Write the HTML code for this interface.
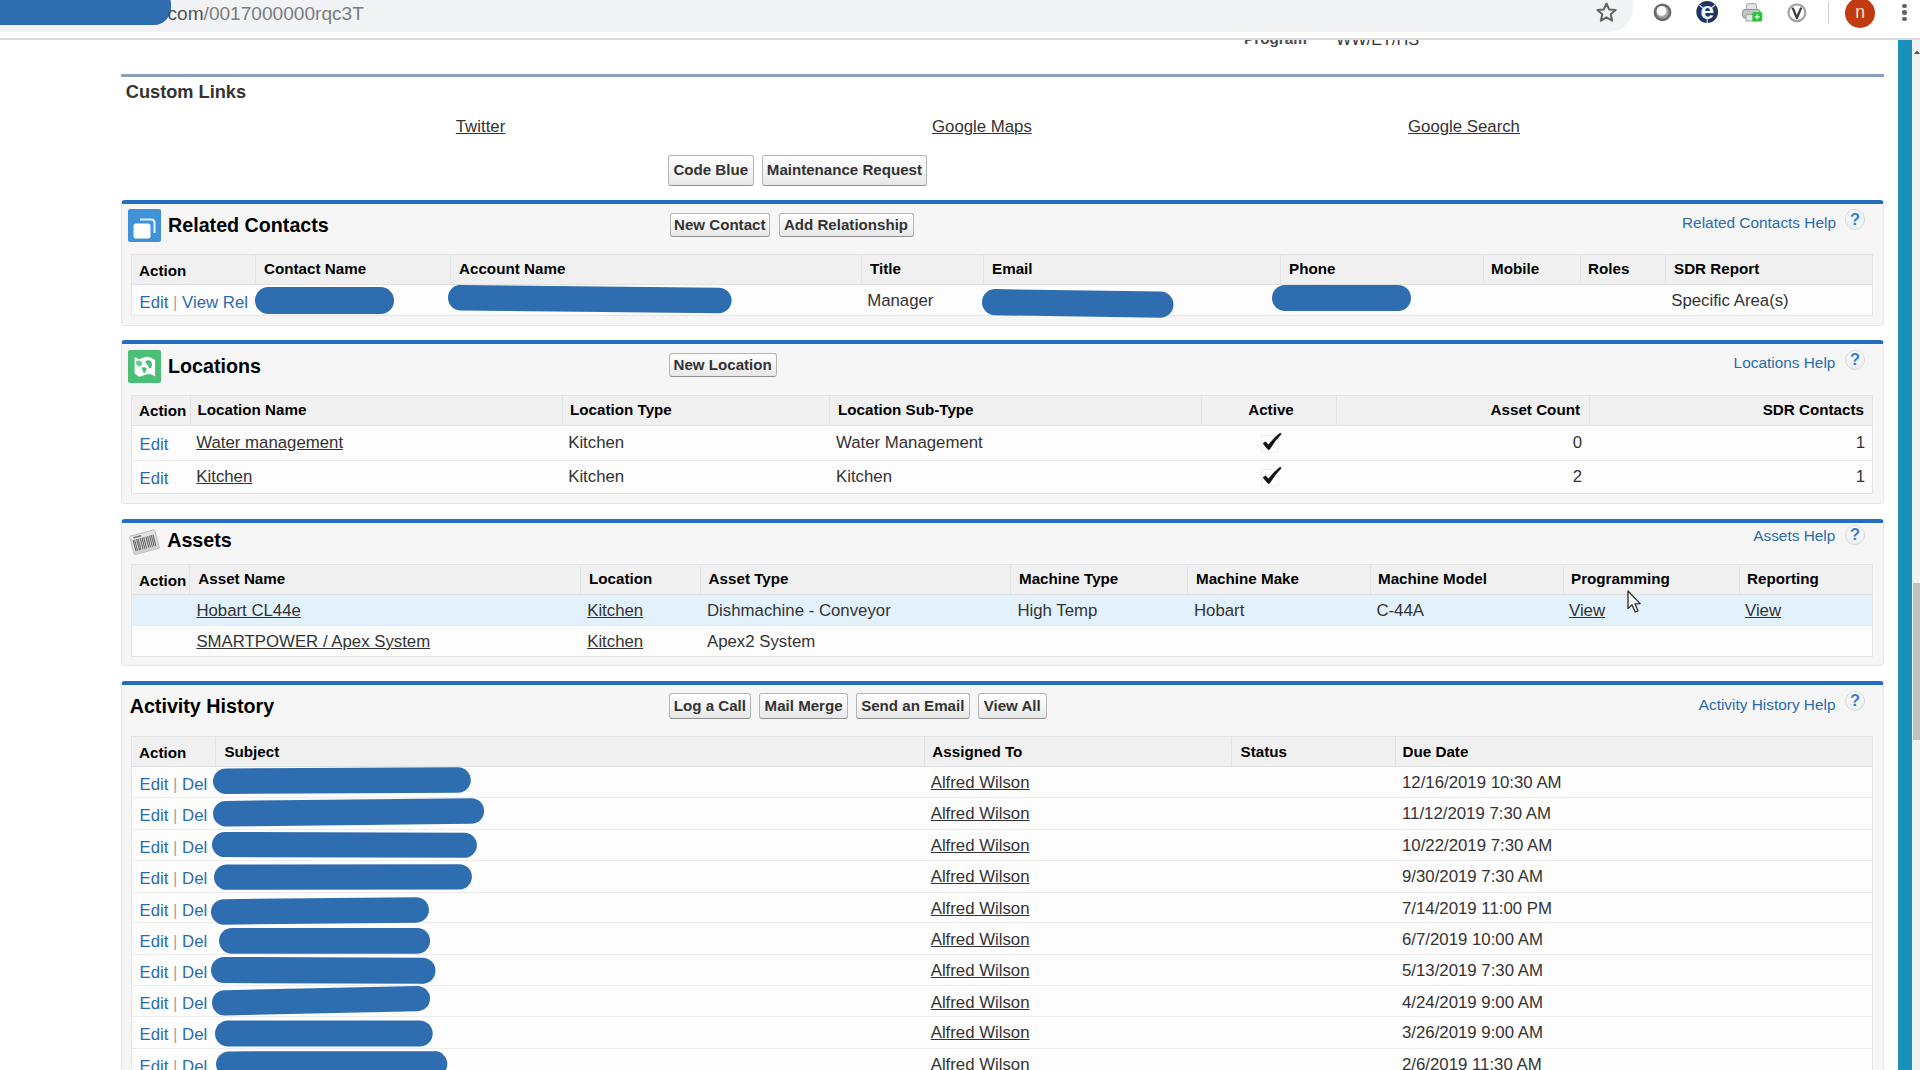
<!DOCTYPE html><html><head><meta charset="utf-8"><style>
html,body{margin:0;padding:0;width:1920px;height:1070px;overflow:hidden;background:#fff;font-family:"Liberation Sans", sans-serif;}
.t{position:absolute;white-space:nowrap;}
.r{position:absolute;}
.btn{position:absolute;box-sizing:content-box;border:1px solid #b5b5b5;border-bottom-color:#8f8f8f;border-radius:3px;
 background:linear-gradient(#fefefe,#f3f3f3 55%,#e7e7e7);color:#333;font-weight:bold;text-align:center;white-space:nowrap;}
.scr{position:absolute;background:#2e6eb0;}
.hq{position:absolute;border:1px solid #d6d9dc;border-radius:50%;background:linear-gradient(#fbfbfb,#eceef0);text-align:center;}
.hq span{position:absolute;left:0;right:0;top:-0.5px;font-size:16.5px;line-height:18px;font-weight:bold;color:#3480cc;}
.pnl{position:absolute;background:#f6f6f6;border:1px solid #e6e6e6;border-top:4px solid #236fbd;border-radius:4px;}
.u{text-decoration:underline;}
</style></head><body>
<div class="r" style="left:0px;top:0px;width:1920.00px;height:38.00px;background:#fff;"></div>
<div class="r" style="left:-40px;top:-24px;width:1672.5px;height:55.5px;background:#f1f3f4;border-radius:0 24px 24px 0;"></div>
<div class="scr" style="left:-40px;top:-12px;width:210.5px;height:37px;border-radius:0 16px 17px 0 / 0 16px 17px 0;"></div>
<div class="t" style="left:167.5px;top:3.83px;font-size:19.1px;line-height:19.1px;color:#7a7c80;"><span style="color:#4f5256">com</span>/0017000000rqc3T</div>
<svg style="position:absolute;left:1594.5px;top:0.5px" width="23" height="23" viewBox="0 0 24 24"><path d="M12 2.6l2.75 6.2 6.75.65-5.1 4.5 1.5 6.6L12 17.1l-5.9 3.45 1.5-6.6-5.1-4.5 6.75-.65z" fill="none" stroke="#5f6368" stroke-width="2.1" stroke-linejoin="round"/></svg>
<svg style="position:absolute;left:1653px;top:3px" width="19" height="19" viewBox="0 0 19 19"><circle cx="9.5" cy="9.3" r="7.6" fill="#a3a3a3" stroke="#6b6b6b" stroke-width="2.6"/><circle cx="8.6" cy="8.0" r="4.9" fill="#fbfbfb"/></svg>
<svg style="position:absolute;left:1696px;top:1.3px" width="22.5" height="22" viewBox="0 0 22.5 22"><circle cx="11.2" cy="11" r="10.9" fill="#1e3560"/><path d="M3.4 4 L7.6 7.6 M19 4 L14.8 7.6 M11.2 16.5 L11.2 22" stroke="#d6e2ee" stroke-width="1.2"/><text x="11.2" y="18.2" text-anchor="middle" font-family="Liberation Sans" font-weight="bold" font-size="24.5" fill="#eef4fa">e</text></svg>
<svg style="position:absolute;left:1742px;top:3px" width="21" height="19" viewBox="0 0 21 19"><rect x="4.5" y="0.6" width="10" height="7" rx="1.8" fill="#e4e4e4" stroke="#a0a0a0"/><rect x="0.6" y="6.5" width="17.5" height="8.5" rx="2.2" fill="#c4c4c4" stroke="#909090"/><rect x="4" y="11.5" width="9" height="6.5" fill="#e6e6e6" stroke="#a0a0a0"/><rect x="10.3" y="9" width="10" height="9.5" rx="1.5" fill="#2cc23e"/><path d="M15.3 11.3v5M12.8 13.8h5" stroke="#e8ffe8" stroke-width="1.3"/></svg>
<svg style="position:absolute;left:1787px;top:2.5px" width="20" height="20" viewBox="0 0 20 20"><circle cx="9.9" cy="9.7" r="8.4" fill="#fff" stroke="#a4a4a4" stroke-width="2.3"/><path d="M5.6 4.6 L9.9 15 L14.2 4.6" fill="none" stroke="#3e3e3e" stroke-width="2.3" stroke-linejoin="round"/></svg>
<div class="r" style="left:1828px;top:2px;width:1.00px;height:22.00px;background:#d2d2d2;"></div>
<div class="r" style="left:1845px;top:-2.5px;width:30.00px;height:30.50px;border-radius:50%;background:#c23b10;"></div>
<div class="t" style="left:1660.2px;width:400px;text-align:center;top:4.10px;font-size:17.6px;line-height:17.6px;color:#f0e4cf;">n</div>
<div class="r" style="left:1902.2px;top:3.5px;width:4.40px;height:4.40px;border-radius:50%;background:#5f6368;"></div>
<div class="r" style="left:1902.2px;top:10.3px;width:4.40px;height:4.40px;border-radius:50%;background:#5f6368;"></div>
<div class="r" style="left:1902.2px;top:17.1px;width:4.40px;height:4.40px;border-radius:50%;background:#5f6368;"></div>
<div style="position:absolute;left:0;top:39px;width:1898px;height:1031px;overflow:hidden;">
<div style="position:absolute;left:0;top:-39px;width:1920px;height:1070px;">
<div class="t" style="left:1244px;top:31.35px;font-size:15.3px;line-height:15.3px;color:#4a4a4a;font-weight:bold;">Program</div>
<div class="t" style="left:1336px;top:30.50px;font-size:16.3px;line-height:16.3px;color:#333;">WW/ET/HS</div>
<div class="r" style="left:121px;top:73.5px;width:1763.00px;height:3.30px;background:#8c9ebe;"></div>
<div class="t" style="left:125.8px;top:82.89px;font-size:18.2px;line-height:18.2px;color:#333;font-weight:bold;">Custom Links</div>
<div class="t" style="left:455.8px;top:119.28px;font-size:16.8px;line-height:16.8px;color:#333;text-decoration:underline;">Twitter</div>
<div class="t" style="left:932px;top:119.28px;font-size:16.8px;line-height:16.8px;color:#333;text-decoration:underline;">Google Maps</div>
<div class="t" style="left:1408px;top:119.28px;font-size:16.8px;line-height:16.8px;color:#333;text-decoration:underline;">Google Search</div>
<div class="btn" style="left:668px;top:155.2px;width:83.50px;height:28.60px;line-height:28.60px;font-size:15.1px;">Code Blue</div>
<div class="btn" style="left:762px;top:155.2px;width:162.80px;height:28.60px;line-height:28.60px;font-size:15.1px;">Maintenance Request</div>
<div class="pnl" style="left:121px;top:200px;width:1761px;height:120.50px;"></div>
<div class="r" style="left:127.5px;top:208.7px;width:33.50px;height:33.50px;background:#3f91d8;border-radius:2px;"></div>
<svg style="position:absolute;left:127.5px;top:208.7px" width="34" height="34" viewBox="0 0 34 34"><path d="M12 10.5 h11.5 a3 3 0 0 1 3 3 v10.5" fill="none" stroke="#fff" stroke-width="2.2" opacity="0.85"/><rect x="5.5" y="14.5" width="17" height="15" rx="2.5" fill="#fff"/></svg>
<div class="t" style="left:168px;top:216.12px;font-size:19.7px;line-height:19.7px;color:#000;font-weight:bold;">Related Contacts</div>
<div class="btn" style="left:669.5px;top:212.8px;width:98.50px;height:22.00px;line-height:22.00px;font-size:15.1px;">New Contact</div>
<div class="btn" style="left:778.5px;top:212.8px;width:133.00px;height:22.00px;line-height:22.00px;font-size:15.1px;">Add Relationship</div>
<div class="t" style="left:1682px;top:215.26px;font-size:15.4px;line-height:15.4px;color:#2a6cab;">Related Contacts Help</div>
<div class="hq" style="left:1844.8px;top:209.3px;width:18.60px;height:18.60px;"><span>?</span></div>
<div class="r" style="left:131px;top:254px;width:1742.00px;height:61.90px;background:#fdfdfd;border:1px solid #e4e5e6;box-sizing:border-box;"></div>
<div class="r" style="left:131px;top:254px;width:1742.00px;height:30.90px;background:#f0f0f0;border:1px solid #e4e5e6;border-bottom-color:#e0e1e2;box-sizing:border-box;"></div>
<div class="r" style="left:255.2px;top:255px;width:1.00px;height:28.90px;background:#e2e3e4;"></div>
<div class="r" style="left:450px;top:255px;width:1.00px;height:28.90px;background:#e2e3e4;"></div>
<div class="r" style="left:860.7px;top:255px;width:1.00px;height:28.90px;background:#e2e3e4;"></div>
<div class="r" style="left:983.2px;top:255px;width:1.00px;height:28.90px;background:#e2e3e4;"></div>
<div class="r" style="left:1280.3px;top:255px;width:1.00px;height:28.90px;background:#e2e3e4;"></div>
<div class="r" style="left:1483px;top:255px;width:1.00px;height:28.90px;background:#e2e3e4;"></div>
<div class="r" style="left:1579.8px;top:255px;width:1.00px;height:28.90px;background:#e2e3e4;"></div>
<div class="r" style="left:1664.6px;top:255px;width:1.00px;height:28.90px;background:#e2e3e4;"></div>
<div class="t" style="left:139px;top:262.63px;font-size:15.2px;line-height:15.2px;color:#000;font-weight:bold;">Action</div>
<div class="t" style="left:264px;top:261.33px;font-size:15.2px;line-height:15.2px;color:#000;font-weight:bold;">Contact Name</div>
<div class="t" style="left:459px;top:261.33px;font-size:15.2px;line-height:15.2px;color:#000;font-weight:bold;">Account Name</div>
<div class="t" style="left:870px;top:261.33px;font-size:15.2px;line-height:15.2px;color:#000;font-weight:bold;">Title</div>
<div class="t" style="left:992px;top:261.33px;font-size:15.2px;line-height:15.2px;color:#000;font-weight:bold;">Email</div>
<div class="t" style="left:1289px;top:261.33px;font-size:15.2px;line-height:15.2px;color:#000;font-weight:bold;">Phone</div>
<div class="t" style="left:1491px;top:261.33px;font-size:15.2px;line-height:15.2px;color:#000;font-weight:bold;">Mobile</div>
<div class="t" style="left:1588px;top:261.33px;font-size:15.2px;line-height:15.2px;color:#000;font-weight:bold;">Roles</div>
<div class="t" style="left:1674px;top:261.33px;font-size:15.2px;line-height:15.2px;color:#000;font-weight:bold;">SDR Report</div>
<div class="t" style="left:139.5px;top:294.58px;font-size:16.8px;line-height:16.8px;color:#2a6cab;">Edit <span style="color:#a8a39a">|</span> View Rel</div>
<div class="scr" style="left:255.2px;top:287.1px;width:138.80px;height:26.50px;border-radius:13.25px;"></div>
<svg style="position:absolute;left:446.00px;top:282.80px" width="287.60" height="32.40"><path d="M14.82 14.70 L272.78 17.45" stroke="#2e6eb0" stroke-width="25.65" stroke-linecap="round" fill="none"/></svg>
<div class="t" style="left:867.2px;top:293.48px;font-size:16.8px;line-height:16.8px;color:#333;">Manager</div>
<svg style="position:absolute;left:980.00px;top:286.60px" width="195.50" height="32.60"><path d="M15.10 15.20 L180.40 17.60" stroke="#2e6eb0" stroke-width="26.20" stroke-linecap="round" fill="none"/></svg>
<div class="scr" style="left:1271.7px;top:284.9px;width:138.90px;height:26.30px;border-radius:13.15px;"></div>
<div class="t" style="left:1671.2px;top:293.48px;font-size:16.8px;line-height:16.8px;color:#333;">Specific Area(s)</div>
<div class="pnl" style="left:121px;top:340px;width:1761px;height:158.50px;"></div>
<div class="r" style="left:127.7px;top:349.5px;width:33.40px;height:33.60px;background:#4bbf78;border-radius:2px;"></div>
<svg style="position:absolute;left:127.7px;top:349.5px" width="33.4" height="33.6" viewBox="0 0 33.4 33.6"><path d="M6.6 7.2 Q9 7.6 11.2 9.6 Q14 7.6 17.2 7.1 Q20 6.6 21.8 7.2 Q24.5 8.3 27.1 10 L27.1 26.4 Q24.5 24.6 21.8 24 Q19 24.3 17.2 24.8 Q14 26.3 11.2 26.8 Q8.5 25.2 6.6 23.3 Z" fill="#fafdfb"/><path d="M7.8 12 Q9.5 9.8 12.5 11 Q14.8 12.6 13.6 15.2 Q12 17.2 9.8 16 Q7.6 14.6 7.8 12 Z" fill="#6ccb8f"/><path d="M13.6 17.6 Q16.8 16.4 18.8 18.4 Q18.2 21.6 16.2 23.4 Q14.4 21.2 13.6 17.6 Z" fill="#4bbf78"/><path d="M17.6 11 Q20.5 9.2 23.2 11.4 Q24.8 14 23.6 17.6 Q22 19 20.6 17.2 Q20.6 15 18.6 14.2 Q17 12.8 17.6 11 Z" fill="#4bbf78"/></svg>
<div class="t" style="left:168px;top:357.12px;font-size:19.7px;line-height:19.7px;color:#000;font-weight:bold;">Locations</div>
<div class="btn" style="left:668.5px;top:352.6px;width:106.30px;height:22.10px;line-height:22.10px;font-size:15.1px;">New Location</div>
<div class="t" style="left:1733.6px;top:355.46px;font-size:15.4px;line-height:15.4px;color:#2a6cab;">Locations Help</div>
<div class="hq" style="left:1844.8px;top:349.5px;width:18.60px;height:18.60px;"><span>?</span></div>
<div class="r" style="left:131px;top:395px;width:1742.00px;height:99.40px;background:#fdfdfd;border:1px solid #e4e5e6;box-sizing:border-box;"></div>
<div class="r" style="left:131px;top:395px;width:1742.00px;height:31.00px;background:#f0f0f0;border:1px solid #e4e5e6;border-bottom-color:#e0e1e2;box-sizing:border-box;"></div>
<div class="r" style="left:190px;top:396px;width:1.00px;height:29.00px;background:#e2e3e4;"></div>
<div class="r" style="left:561.5px;top:396px;width:1.00px;height:29.00px;background:#e2e3e4;"></div>
<div class="r" style="left:829px;top:396px;width:1.00px;height:29.00px;background:#e2e3e4;"></div>
<div class="r" style="left:1201px;top:396px;width:1.00px;height:29.00px;background:#e2e3e4;"></div>
<div class="r" style="left:1336px;top:396px;width:1.00px;height:29.00px;background:#e2e3e4;"></div>
<div class="r" style="left:1589.4px;top:396px;width:1.00px;height:29.00px;background:#e2e3e4;"></div>
<div class="r" style="left:132px;top:459.7px;width:1740.00px;height:1.00px;background:#ececec;"></div>
<div class="t" style="left:139px;top:403.13px;font-size:15.2px;line-height:15.2px;color:#000;font-weight:bold;">Action</div>
<div class="t" style="left:197.5px;top:401.83px;font-size:15.2px;line-height:15.2px;color:#000;font-weight:bold;">Location Name</div>
<div class="t" style="left:570px;top:401.83px;font-size:15.2px;line-height:15.2px;color:#000;font-weight:bold;">Location Type</div>
<div class="t" style="left:838px;top:401.83px;font-size:15.2px;line-height:15.2px;color:#000;font-weight:bold;">Location Sub-Type</div>
<div class="t" style="left:1071px;width:400px;text-align:center;top:401.83px;font-size:15.2px;line-height:15.2px;color:#000;font-weight:bold;">Active</div>
<div class="t" style="right:340px;top:401.83px;font-size:15.2px;line-height:15.2px;color:#000;font-weight:bold;">Asset Count</div>
<div class="t" style="right:56px;top:401.83px;font-size:15.2px;line-height:15.2px;color:#000;font-weight:bold;">SDR Contacts</div>
<div class="t" style="left:139.5px;top:437.08px;font-size:16.8px;line-height:16.8px;color:#2a6cab;">Edit</div>
<div class="t" style="left:196.3px;top:434.88px;font-size:16.8px;line-height:16.8px;color:#333;text-decoration:underline;">Water management</div>
<div class="t" style="left:568.2px;top:434.88px;font-size:16.8px;line-height:16.8px;color:#333;">Kitchen</div>
<div class="t" style="left:836px;top:434.88px;font-size:16.8px;line-height:16.8px;color:#333;">Water Management</div>
<svg style="position:absolute;left:1258px;top:430.00px" width="26" height="26" viewBox="0 0 26 26"><rect x="3.5" y="5.5" width="16.5" height="16.5" fill="none" stroke="#dadada" stroke-width="0.8" stroke-dasharray="1.2 1.2"/><path d="M5.0 13.6 L7.5 11.7 L10.5 15.0 Q15.5 8.0 22.1 2.9 L23.3 4.0 Q16.5 11 11.6 19.4 L10.0 19.4 Z" fill="#111" stroke="#111" stroke-width="0.5" stroke-linejoin="round"/></svg>
<div class="t" style="right:338px;top:434.58px;font-size:16.8px;line-height:16.8px;color:#333;">0</div>
<div class="t" style="right:55px;top:434.58px;font-size:16.8px;line-height:16.8px;color:#333;">1</div>
<div class="t" style="left:139.5px;top:471.48px;font-size:16.8px;line-height:16.8px;color:#2a6cab;">Edit</div>
<div class="t" style="left:196.3px;top:469.28px;font-size:16.8px;line-height:16.8px;color:#333;text-decoration:underline;">Kitchen</div>
<div class="t" style="left:568.2px;top:469.28px;font-size:16.8px;line-height:16.8px;color:#333;">Kitchen</div>
<div class="t" style="left:836px;top:469.28px;font-size:16.8px;line-height:16.8px;color:#333;">Kitchen</div>
<svg style="position:absolute;left:1258px;top:464.40px" width="26" height="26" viewBox="0 0 26 26"><rect x="3.5" y="5.5" width="16.5" height="16.5" fill="none" stroke="#dadada" stroke-width="0.8" stroke-dasharray="1.2 1.2"/><path d="M5.0 13.6 L7.5 11.7 L10.5 15.0 Q15.5 8.0 22.1 2.9 L23.3 4.0 Q16.5 11 11.6 19.4 L10.0 19.4 Z" fill="#111" stroke="#111" stroke-width="0.5" stroke-linejoin="round"/></svg>
<div class="t" style="right:338px;top:468.98px;font-size:16.8px;line-height:16.8px;color:#333;">2</div>
<div class="t" style="right:55px;top:468.98px;font-size:16.8px;line-height:16.8px;color:#333;">1</div>
<div class="pnl" style="left:121px;top:519px;width:1761px;height:142.30px;"></div>
<svg style="position:absolute;left:124px;top:524px" width="42" height="36" viewBox="0 0 42 36"><g transform="rotate(-15 20.5 18.2)"><rect x="7.5" y="8.7" width="26" height="19" rx="0.8" fill="#e2e2e2" stroke="#b8b8b8" stroke-width="0.9"/><rect x="11" y="10.3" width="8" height="1.6" fill="#777"/><path d="M10 13.2v12M11.6 13.2v12M13.6 13.2v12M15.2 13.2v12M17.4 13.2v12M19.2 13.2v12M21 13.2v12M23.2 13.2v12M25 13.2v12M27 13.2v12M28.8 13.2v12M30.6 13.2v12" stroke="#5e5e5e" stroke-width="1.05"/><rect x="7.5" y="24.6" width="26" height="3" fill="#cfcfcf"/></g></svg>
<div class="t" style="left:167.2px;top:530.62px;font-size:19.7px;line-height:19.7px;color:#000;font-weight:bold;">Assets</div>
<div class="t" style="left:1753.2px;top:528.26px;font-size:15.4px;line-height:15.4px;color:#2a6cab;">Assets Help</div>
<div class="hq" style="left:1844.8px;top:524.5px;width:18.60px;height:18.60px;"><span>?</span></div>
<div class="r" style="left:131px;top:564px;width:1742.00px;height:92.60px;background:#fdfdfd;border:1px solid #e4e5e6;box-sizing:border-box;"></div>
<div class="r" style="left:132px;top:594.7px;width:1740.00px;height:29.90px;background:#e3f1fc;"></div>
<div class="r" style="left:131px;top:564px;width:1742.00px;height:30.70px;background:#f0f0f0;border:1px solid #e4e5e6;border-bottom-color:#e0e1e2;box-sizing:border-box;"></div>
<div class="r" style="left:189.4px;top:565px;width:1.00px;height:28.70px;background:#e2e3e4;"></div>
<div class="r" style="left:580.2px;top:565px;width:1.00px;height:28.70px;background:#e2e3e4;"></div>
<div class="r" style="left:700.3px;top:565px;width:1.00px;height:28.70px;background:#e2e3e4;"></div>
<div class="r" style="left:1010.4px;top:565px;width:1.00px;height:28.70px;background:#e2e3e4;"></div>
<div class="r" style="left:1187.4px;top:565px;width:1.00px;height:28.70px;background:#e2e3e4;"></div>
<div class="r" style="left:1370.4px;top:565px;width:1.00px;height:28.70px;background:#e2e3e4;"></div>
<div class="r" style="left:1562.6px;top:565px;width:1.00px;height:28.70px;background:#e2e3e4;"></div>
<div class="r" style="left:1738.9px;top:565px;width:1.00px;height:28.70px;background:#e2e3e4;"></div>
<div class="r" style="left:132px;top:624.5px;width:1740.00px;height:1.00px;background:#ececec;"></div>
<div class="t" style="left:139px;top:572.63px;font-size:15.2px;line-height:15.2px;color:#000;font-weight:bold;">Action</div>
<div class="t" style="left:198.3px;top:571.33px;font-size:15.2px;line-height:15.2px;color:#000;font-weight:bold;">Asset Name</div>
<div class="t" style="left:589px;top:571.33px;font-size:15.2px;line-height:15.2px;color:#000;font-weight:bold;">Location</div>
<div class="t" style="left:708.6px;top:571.33px;font-size:15.2px;line-height:15.2px;color:#000;font-weight:bold;">Asset Type</div>
<div class="t" style="left:1019px;top:571.33px;font-size:15.2px;line-height:15.2px;color:#000;font-weight:bold;">Machine Type</div>
<div class="t" style="left:1196px;top:571.33px;font-size:15.2px;line-height:15.2px;color:#000;font-weight:bold;">Machine Make</div>
<div class="t" style="left:1378px;top:571.33px;font-size:15.2px;line-height:15.2px;color:#000;font-weight:bold;">Machine Model</div>
<div class="t" style="left:1571px;top:571.33px;font-size:15.2px;line-height:15.2px;color:#000;font-weight:bold;">Programming</div>
<div class="t" style="left:1747px;top:571.33px;font-size:15.2px;line-height:15.2px;color:#000;font-weight:bold;">Reporting</div>
<div class="t" style="left:196.4px;top:602.98px;font-size:16.8px;line-height:16.8px;color:#333;text-decoration:underline;">Hobart CL44e</div>
<div class="t" style="left:587.2px;top:602.98px;font-size:16.8px;line-height:16.8px;color:#333;text-decoration:underline;">Kitchen</div>
<div class="t" style="left:707px;top:602.98px;font-size:16.8px;line-height:16.8px;color:#333;">Dishmachine - Conveyor</div>
<div class="t" style="left:1017.4px;top:602.98px;font-size:16.8px;line-height:16.8px;color:#333;">High Temp</div>
<div class="t" style="left:1194px;top:602.98px;font-size:16.8px;line-height:16.8px;color:#333;">Hobart</div>
<div class="t" style="left:1376.4px;top:602.98px;font-size:16.8px;line-height:16.8px;color:#333;">C-44A</div>
<div class="t" style="left:1569px;top:602.98px;font-size:16.8px;line-height:16.8px;color:#333;text-decoration:underline;">View</div>
<div class="t" style="left:1745px;top:602.98px;font-size:16.8px;line-height:16.8px;color:#333;text-decoration:underline;">View</div>
<div class="t" style="left:196.4px;top:633.88px;font-size:16.8px;line-height:16.8px;color:#333;text-decoration:underline;">SMARTPOWER / Apex System</div>
<div class="t" style="left:587.2px;top:633.88px;font-size:16.8px;line-height:16.8px;color:#333;text-decoration:underline;">Kitchen</div>
<div class="t" style="left:707px;top:633.88px;font-size:16.8px;line-height:16.8px;color:#333;">Apex2 System</div>
<div class="pnl" style="left:121px;top:681.4px;width:1761px;height:513.60px;"></div>
<div class="t" style="left:129.7px;top:697.22px;font-size:19.7px;line-height:19.7px;color:#000;font-weight:bold;">Activity History</div>
<div class="btn" style="left:668.6px;top:693.4px;width:80.60px;height:23.40px;line-height:23.40px;font-size:15.1px;">Log a Call</div>
<div class="btn" style="left:759.1px;top:693.4px;width:87.00px;height:23.40px;line-height:23.40px;font-size:15.1px;">Mail Merge</div>
<div class="btn" style="left:856px;top:693.4px;width:111.50px;height:23.40px;line-height:23.40px;font-size:15.1px;">Send an Email</div>
<div class="btn" style="left:977.7px;top:693.4px;width:67.00px;height:23.40px;line-height:23.40px;font-size:15.1px;">View All</div>
<div class="t" style="left:1698.7px;top:697.26px;font-size:15.4px;line-height:15.4px;color:#2a6cab;">Activity History Help</div>
<div class="hq" style="left:1844.8px;top:690.5px;width:18.60px;height:18.60px;"><span>?</span></div>
<div class="r" style="left:131px;top:736px;width:1742.00px;height:364.50px;background:#fdfdfd;border:1px solid #e4e5e6;box-sizing:border-box;"></div>
<div class="r" style="left:131px;top:736px;width:1742.00px;height:30.80px;background:#f0f0f0;border:1px solid #e4e5e6;border-bottom-color:#e0e1e2;box-sizing:border-box;"></div>
<div class="r" style="left:214.8px;top:737px;width:1.00px;height:28.80px;background:#e2e3e4;"></div>
<div class="r" style="left:924.4px;top:737px;width:1.00px;height:28.80px;background:#e2e3e4;"></div>
<div class="r" style="left:1231px;top:737px;width:1.00px;height:28.80px;background:#e2e3e4;"></div>
<div class="r" style="left:1395px;top:737px;width:1.00px;height:28.80px;background:#e2e3e4;"></div>
<div class="r" style="left:132px;top:796.7px;width:1740.00px;height:1.00px;background:#ececec;"></div>
<div class="r" style="left:132px;top:828.5px;width:1740.00px;height:1.00px;background:#ececec;"></div>
<div class="r" style="left:132px;top:859.5px;width:1740.00px;height:1.00px;background:#ececec;"></div>
<div class="r" style="left:132px;top:891.5px;width:1740.00px;height:1.00px;background:#ececec;"></div>
<div class="r" style="left:132px;top:922.3px;width:1740.00px;height:1.00px;background:#ececec;"></div>
<div class="r" style="left:132px;top:953.9px;width:1740.00px;height:1.00px;background:#ececec;"></div>
<div class="r" style="left:132px;top:985.1px;width:1740.00px;height:1.00px;background:#ececec;"></div>
<div class="r" style="left:132px;top:1016.0px;width:1740.00px;height:1.00px;background:#ececec;"></div>
<div class="r" style="left:132px;top:1047.6px;width:1740.00px;height:1.00px;background:#ececec;"></div>
<div class="r" style="left:132px;top:1078.9px;width:1740.00px;height:1.00px;background:#ececec;"></div>
<div class="t" style="left:139px;top:745.33px;font-size:15.2px;line-height:15.2px;color:#000;font-weight:bold;">Action</div>
<div class="t" style="left:224.4px;top:744.03px;font-size:15.2px;line-height:15.2px;color:#000;font-weight:bold;">Subject</div>
<div class="t" style="left:932.3px;top:744.03px;font-size:15.2px;line-height:15.2px;color:#000;font-weight:bold;">Assigned To</div>
<div class="t" style="left:1240.5px;top:744.03px;font-size:15.2px;line-height:15.2px;color:#000;font-weight:bold;">Status</div>
<div class="t" style="left:1402.5px;top:744.03px;font-size:15.2px;line-height:15.2px;color:#000;font-weight:bold;">Due Date</div>
<div class="t" style="left:139.5px;top:777.08px;font-size:16.8px;line-height:16.8px;color:#2a6cab;">Edit <span style="color:#a8a39a">|</span> Del</div>
<div class="t" style="left:930.7px;top:775.28px;font-size:16.8px;line-height:16.8px;color:#333;text-decoration:underline;">Alfred Wilson</div>
<div class="t" style="left:1402px;top:775.28px;font-size:16.8px;line-height:16.8px;color:#333;">12/16/2019 10:30 AM</div>
<svg style="position:absolute;left:210.50px;top:765.00px" width="261.80" height="30.80"><path d="M14.80 16.20 L247.00 15.00" stroke="#2e6eb0" stroke-width="25.60" stroke-linecap="round" fill="none"/></svg>
<div class="t" style="left:139.5px;top:807.98px;font-size:16.8px;line-height:16.8px;color:#2a6cab;">Edit <span style="color:#a8a39a">|</span> Del</div>
<div class="t" style="left:930.7px;top:806.18px;font-size:16.8px;line-height:16.8px;color:#333;text-decoration:underline;">Alfred Wilson</div>
<div class="t" style="left:1402px;top:806.18px;font-size:16.8px;line-height:16.8px;color:#333;">11/12/2019 7:30 AM</div>
<svg style="position:absolute;left:210.50px;top:796.30px" width="275.10" height="32.30"><path d="M14.78 17.70 L260.32 14.95" stroke="#2e6eb0" stroke-width="25.55" stroke-linecap="round" fill="none"/></svg>
<div class="t" style="left:139.5px;top:839.78px;font-size:16.8px;line-height:16.8px;color:#2a6cab;">Edit <span style="color:#a8a39a">|</span> Del</div>
<div class="t" style="left:930.7px;top:837.98px;font-size:16.8px;line-height:16.8px;color:#333;text-decoration:underline;">Alfred Wilson</div>
<div class="t" style="left:1402px;top:837.98px;font-size:16.8px;line-height:16.8px;color:#333;">10/22/2019 7:30 AM</div>
<svg style="position:absolute;left:209.70px;top:829.90px" width="268.90" height="29.80"><path d="M14.55 14.55 L254.35 15.25" stroke="#2e6eb0" stroke-width="25.10" stroke-linecap="round" fill="none"/></svg>
<div class="t" style="left:139.5px;top:870.78px;font-size:16.8px;line-height:16.8px;color:#2a6cab;">Edit <span style="color:#a8a39a">|</span> Del</div>
<div class="t" style="left:930.7px;top:868.98px;font-size:16.8px;line-height:16.8px;color:#333;text-decoration:underline;">Alfred Wilson</div>
<div class="t" style="left:1402px;top:868.98px;font-size:16.8px;line-height:16.8px;color:#333;">9/30/2019 7:30 AM</div>
<svg style="position:absolute;left:212.00px;top:862.00px" width="261.90" height="29.70"><path d="M14.68 15.20 L247.22 14.85" stroke="#2e6eb0" stroke-width="25.35" stroke-linecap="round" fill="none"/></svg>
<div class="t" style="left:139.5px;top:902.78px;font-size:16.8px;line-height:16.8px;color:#2a6cab;">Edit <span style="color:#a8a39a">|</span> Del</div>
<div class="t" style="left:930.7px;top:900.98px;font-size:16.8px;line-height:16.8px;color:#333;text-decoration:underline;">Alfred Wilson</div>
<div class="t" style="left:1402px;top:900.98px;font-size:16.8px;line-height:16.8px;color:#333;">7/14/2019 11:00 PM</div>
<svg style="position:absolute;left:208.90px;top:895.00px" width="221.90" height="31.50"><path d="M14.75 16.90 L207.15 14.90" stroke="#2e6eb0" stroke-width="25.50" stroke-linecap="round" fill="none"/></svg>
<div class="t" style="left:139.5px;top:933.58px;font-size:16.8px;line-height:16.8px;color:#2a6cab;">Edit <span style="color:#a8a39a">|</span> Del</div>
<div class="t" style="left:930.7px;top:931.78px;font-size:16.8px;line-height:16.8px;color:#333;text-decoration:underline;">Alfred Wilson</div>
<div class="t" style="left:1402px;top:931.78px;font-size:16.8px;line-height:16.8px;color:#333;">6/7/2019 10:00 AM</div>
<svg style="position:absolute;left:216.50px;top:925.90px" width="215.10" height="29.70"><path d="M14.85 14.85 L200.25 14.85" stroke="#2e6eb0" stroke-width="25.70" stroke-linecap="round" fill="none"/></svg>
<div class="t" style="left:139.5px;top:965.18px;font-size:16.8px;line-height:16.8px;color:#2a6cab;">Edit <span style="color:#a8a39a">|</span> Del</div>
<div class="t" style="left:930.7px;top:963.38px;font-size:16.8px;line-height:16.8px;color:#333;text-decoration:underline;">Alfred Wilson</div>
<div class="t" style="left:1402px;top:963.38px;font-size:16.8px;line-height:16.8px;color:#333;">5/13/2019 7:30 AM</div>
<svg style="position:absolute;left:209.00px;top:955.30px" width="228.50" height="30.90"><path d="M15.08 15.05 L213.42 15.80" stroke="#2e6eb0" stroke-width="26.15" stroke-linecap="round" fill="none"/></svg>
<div class="t" style="left:139.5px;top:996.38px;font-size:16.8px;line-height:16.8px;color:#2a6cab;">Edit <span style="color:#a8a39a">|</span> Del</div>
<div class="t" style="left:930.7px;top:994.58px;font-size:16.8px;line-height:16.8px;color:#333;text-decoration:underline;">Alfred Wilson</div>
<div class="t" style="left:1402px;top:994.58px;font-size:16.8px;line-height:16.8px;color:#333;">4/24/2019 9:00 AM</div>
<svg style="position:absolute;left:210.10px;top:983.90px" width="222.00" height="33.40"><path d="M14.60 18.80 L207.40 14.60" stroke="#2e6eb0" stroke-width="25.20" stroke-linecap="round" fill="none"/></svg>
<div class="t" style="left:139.5px;top:1027.28px;font-size:16.8px;line-height:16.8px;color:#2a6cab;">Edit <span style="color:#a8a39a">|</span> Del</div>
<div class="t" style="left:930.7px;top:1025.48px;font-size:16.8px;line-height:16.8px;color:#333;text-decoration:underline;">Alfred Wilson</div>
<div class="t" style="left:1402px;top:1025.48px;font-size:16.8px;line-height:16.8px;color:#333;">3/26/2019 9:00 AM</div>
<svg style="position:absolute;left:212.80px;top:1017.50px" width="221.70" height="31.00"><path d="M15.05 15.50 L206.65 15.50" stroke="#2e6eb0" stroke-width="26.10" stroke-linecap="round" fill="none"/></svg>
<div class="t" style="left:139.5px;top:1058.88px;font-size:16.8px;line-height:16.8px;color:#2a6cab;">Edit <span style="color:#a8a39a">|</span> Del</div>
<div class="t" style="left:930.7px;top:1057.08px;font-size:16.8px;line-height:16.8px;color:#333;text-decoration:underline;">Alfred Wilson</div>
<div class="t" style="left:1402px;top:1057.08px;font-size:16.8px;line-height:16.8px;color:#333;">2/6/2019 11:30 AM</div>
<svg style="position:absolute;left:214.00px;top:1049.00px" width="235.30" height="30.00"><path d="M14.88 15.25 L220.43 15.00" stroke="#2e6eb0" stroke-width="25.75" stroke-linecap="round" fill="none"/></svg>
<svg style="position:absolute;left:1627px;top:589.5px" width="16" height="24" viewBox="0 0 16 24"><path d="M1 1 L1 18.5 L5 14.8 L8.2 22 L11 20.8 L7.9 13.8 L13.2 13.6 Z" fill="#fff" stroke="#2a2a2a" stroke-width="1.3" stroke-linejoin="round"/></svg>
</div></div>
<div class="r" style="left:1898px;top:39px;width:14.00px;height:1031.00px;background:#1890ba;"></div>
<div class="r" style="left:1912px;top:39px;width:8.00px;height:1031.00px;background:#f1f1f1;"></div>
<div class="r" style="left:1913.3px;top:583px;width:6.70px;height:157.00px;background:#c1c1c1;"></div>
<div class="r" style="left:0px;top:37.5px;width:1920.00px;height:2.10px;background:#d9d9d9;"></div>
<svg style="position:absolute;left:1913px;top:49px" width="7" height="6" viewBox="0 0 7 6"><path d="M1 5 L4 1.5 L7 5 Z" fill="#505050"/></svg>
</body></html>
